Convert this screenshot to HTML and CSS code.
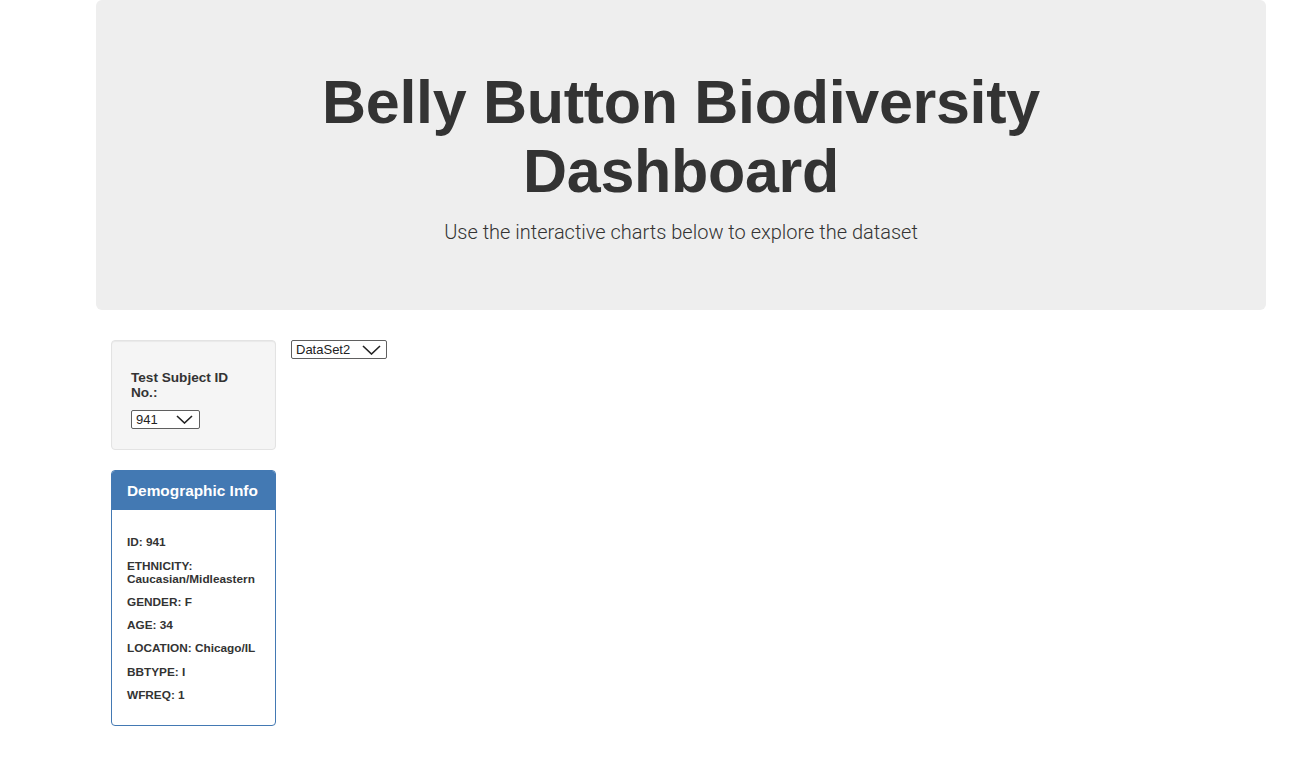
FILE: index.html
```html
<!DOCTYPE html>
<html lang="en">
<head>
<meta charset="utf-8">
<title>Belly Button Biodiversity Dashboard</title>
<link rel="stylesheet" href="styles.css">
</head>
<body>
<div class="container">
  <div class="jumbotron">
    <h1 class="title">Belly Button Biodiversity Dashboard</h1>
    <p class="lead">Use the interactive charts below to explore the dataset</p>
  </div>
  <div class="row">
    <div class="side">
      <div class="well">
        <h5 class="well-label">Test Subject ID No.:</h5>
        <span class="select-wrap sel-id">
          <select class="select"><option>941</option></select>
          <svg class="chev" width="17" height="9" viewBox="0 0 17 9"><path d="M1 1 L8.5 8 L16 1" fill="none" stroke="#222" stroke-width="1.6"/></svg>
        </span>
      </div>
      <div class="panel">
        <div class="panel-heading"><h3 class="panel-title">Demographic Info</h3></div>
        <div class="panel-body">
          <h6 class="info">ID: 941</h6>
          <h6 class="info">ETHNICITY: Caucasian/Midleastern</h6>
          <h6 class="info">GENDER: F</h6>
          <h6 class="info">AGE: 34</h6>
          <h6 class="info">LOCATION: Chicago/IL</h6>
          <h6 class="info">BBTYPE: I</h6>
          <h6 class="info">WFREQ: 1</h6>
        </div>
      </div>
    </div>
    <div class="main">
      <span class="select-wrap sel-ds">
        <select class="select"><option>DataSet2</option></select>
        <svg class="chev" width="19" height="10" viewBox="0 0 19 10"><path d="M1 1 L9.5 9 L18 1" fill="none" stroke="#222" stroke-width="1.6"/></svg>
      </span>
    </div>
  </div>
</div>
</body>
</html>
```
FILE: styles.css
```css
* { box-sizing: border-box; }
body {
  margin: 0;
  background: #fff;
  font-family: "Liberation Sans", Arial, Helvetica, sans-serif;
  font-size: 14px;
  line-height: 1.42857;
  color: #333;
}
.container {
  margin-left: 96px;
  width: 1170px;
}
.jumbotron {
  background: #eee;
  border-radius: 6px;
  padding: 48px 60px;
  margin-bottom: 30px;
  text-align: center;
}
.title {
  font-size: 61px;
  line-height: 69.3px;
  font-weight: 700;
  margin: 20px 0 10px;
  color: #333;
  letter-spacing: -0.3px;
}
.lead {
  font-family: Roboto, "Liberation Sans", sans-serif;
  font-size: 20px;
  font-weight: 300;
  line-height: 30px;
  margin: 0 0 15px;
  color: #333;
}
.row {
  display: flex;
}
.side {
  width: 195px;
  padding: 0 15px;
  flex: none;
}
.main {
  flex: 1;
}
.well {
  background: #f5f5f5;
  border: 1px solid #e3e3e3;
  border-radius: 4px;
  padding: 19px;
  margin-bottom: 20px;
  box-shadow: inset 0 1px 1px rgba(0,0,0,0.05);
}
.well-label {
  font-size: 13.6px;
  font-weight: 700;
  line-height: 15.4px;
  margin: 10px 0;
}
.select-wrap {
  position: relative;
  display: inline-block;
  vertical-align: top;
}
.select {
  -webkit-appearance: none;
  appearance: none;
  display: block;
  background: #fff;
  border: 1px solid #5f5f5f;
  border-radius: 2px;
  height: 19px;
  padding: 0 0 0 4px;
  margin: 0;
  font-family: "Liberation Sans", Arial, sans-serif;
  font-size: 13px;
  line-height: 17px;
  color: #222;
}
.sel-id .select { width: 69px; }
.sel-ds .select { width: 96px; }
.chev {
  position: absolute;
  pointer-events: none;
  display: block;
}
.sel-id .chev { left: 45px; top: 5px; }
.sel-ds .chev { left: 71px; top: 5px; }
.panel {
  border: 1px solid #4379b3;
  border-radius: 4px;
  background: #fff;
  overflow: hidden;
}
.panel-heading {
  background: #4379b3;
  padding: 10px 15px;
  color: #fff;
}
.panel-title {
  margin: 0;
  font-size: 15.4px;
  font-weight: 700;
  line-height: 1.1;
  height: 19px;
  padding-top: 2px;
  white-space: nowrap;
}
.panel-body {
  padding: 16px 15px 13px;
}
.info {
  font-size: 11.8px;
  font-weight: 700;
  line-height: 13.2px;
  margin: 10px 0;
  color: #333;
}
```
